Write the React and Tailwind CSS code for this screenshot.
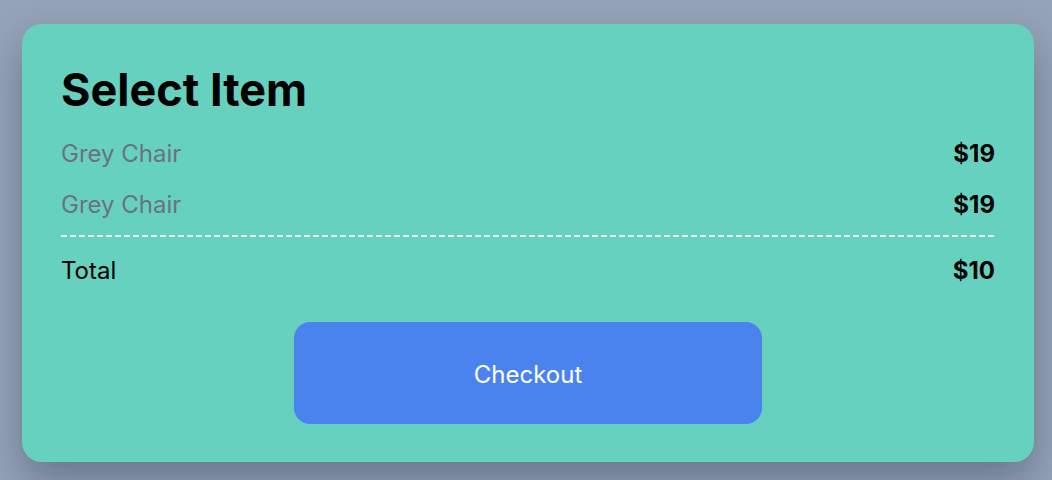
export default function App() {
  const items = [
    { name: 'Grey Chair', price: '$19' },
    { name: 'Grey Chair', price: '$19' },
  ]

  return (
    <div className="min-h-screen w-full bg-[#94a3b8] pt-[24px] pl-[22px] font-['Inter',sans-serif]">
      <div className="w-[1012px] h-[438px] rounded-[20px] bg-[#66d1be] pt-[40px] px-[39px] shadow-[0_20px_40px_rgba(30,41,59,0.35)]">
        <h1 className="text-[45px] leading-[52px] font-bold text-black">Select Item</h1>

        <div className="mt-[12px]">
          {items.map((item, i) => (
            <div key={i} className="flex items-center justify-between h-[51px] text-[24px]">
              <span className="text-[#6b7280]">{item.name}</span>
              <span className="font-bold text-black">{item.price}</span>
            </div>
          ))}
        </div>

        <div className="mt-[5px] h-[2px] bg-[repeating-linear-gradient(90deg,#e8f0ee_0_6px,transparent_6px_9px)]" />

        <div className="mt-[8px] flex items-center justify-between h-[51px] text-[24px] text-black">
          <span>Total</span>
          <span className="font-bold">$10</span>
        </div>

        <button className="mt-[26px] mx-auto flex items-center justify-center w-[468px] h-[102px] pt-[3px] rounded-[16px] bg-[#4a83ed] text-white text-[24px]">
          Checkout
        </button>
      </div>
    </div>
  )
}
